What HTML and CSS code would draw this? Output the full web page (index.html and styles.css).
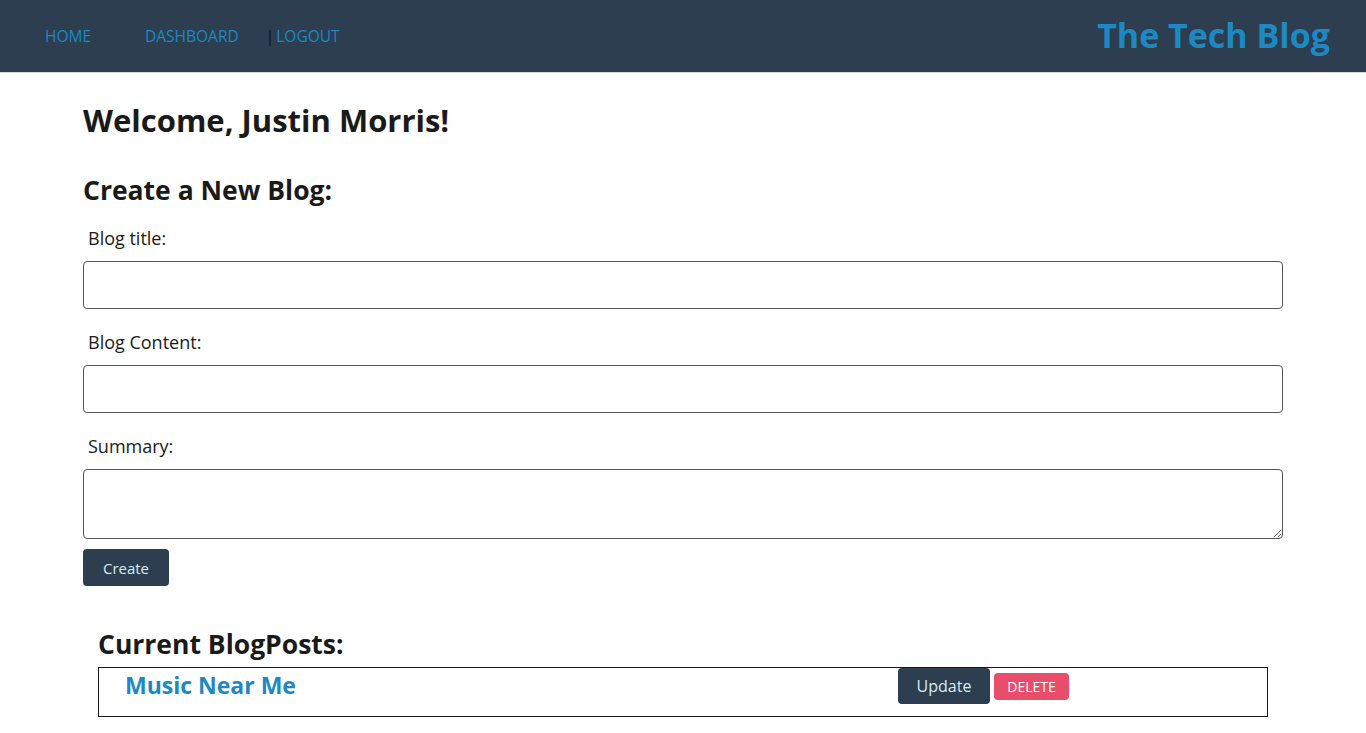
FILE: index.html
```html
<!DOCTYPE html>
<html lang="en">
<head>
<meta charset="utf-8">
<title>The Tech Blog</title>
<link rel="stylesheet" href="styles.css">
</head>
<body>
<header class="site-header">
  <nav class="nav">
    <a class="nav-link nav-home" href="#">HOME</a>
    <a class="nav-link nav-dash" href="#">DASHBOARD</a>
    <span class="nav-sep">|</span><a class="nav-link" href="#">LOGOUT</a>
  </nav>
  <h1 class="brand">The Tech Blog</h1>
</header>
<main class="container">
  <h1 class="welcome">Welcome, Justin Morris!</h1>
  <h2 class="section-title">Create a New Blog:</h2>
  <form class="blog-form">
    <label class="field-label" for="title">Blog title:</label>
    <input class="field" id="title" type="text">
    <label class="field-label" for="content">Blog Content:</label>
    <input class="field" id="content" type="text">
    <label class="field-label" for="summary">Summary:</label>
    <textarea class="field field-area" id="summary"></textarea>
    <button class="btn btn-dark btn-create" type="button">Create</button>
  </form>
  <section class="posts">
    <h2 class="section-title posts-title">Current BlogPosts:</h2>
    <div class="post">
      <a class="post-title" href="#">Music Near Me</a>
      <div class="post-actions">
        <button class="btn btn-dark btn-update" type="button">Update</button>
        <button class="btn btn-delete" type="button">DELETE</button>
      </div>
    </div>
  </section>
</main>
</body>
</html>
```
FILE: styles.css
```css
* { box-sizing: border-box; }
body {
  margin: 0;
  font-family: "Open Sans", "Noto Sans", sans-serif;
  color: #1a1a1a;
  background: #fff;
}
.site-header {
  height: 73px;
  background: #2c3e50;
  border-bottom: 1px solid #d8d8d8;
  display: flex;
  align-items: center;
  justify-content: space-between;
  padding: 0 36px 0 45px;
}
.nav {
  display: flex;
  align-items: center;
  font-size: 15.5px;
}
.nav-link {
  color: #1e88c2;
  text-decoration: none;
}
.nav-home { margin-right: 54px; }
.nav-dash { margin-right: 27px; }
.nav-sep {
  color: #111;
  margin-right: 2px;
}
.brand {
  margin: 0 0 3px;
  font-size: 34px;
  font-weight: 700;
  color: #1e88c2;
}
.container {
  width: 1200px;
  margin: 0 auto;
  padding: 27px 0 40px;
}
.welcome {
  margin: 0;
  font-size: 31px;
  font-weight: 700;
  line-height: 40px;
}
.section-title {
  margin: 32px 0 0;
  font-size: 26.5px;
  font-weight: 700;
  line-height: 36px;
}
.blog-form {
  display: flex;
  flex-direction: column;
  align-items: flex-start;
  padding-top: 18px;
}
.field-label {
  font-size: 18px;
  line-height: 24px;
  margin-left: 5px;
  margin-bottom: 11px;
}
.field {
  width: 100%;
  height: 48px;
  border: 1px solid #555;
  border-radius: 4px;
  margin: 0 0 21px;
  font: inherit;
}
.field-area {
  height: 70px;
  margin-bottom: 10px;
  resize: vertical;
}
.btn {
  font-family: inherit;
  border: none;
  border-radius: 4px;
  cursor: pointer;
}
.btn-dark {
  background: #2c3e50;
  color: #d6ecf5;
  font-size: 15px;
}
.btn-create {
  width: 86px;
  height: 37px;
}
.posts {
  padding: 40px 15px 0;
}
.posts-title { margin-top: 0; }
.post {
  display: grid;
  grid-template-columns: 799px auto;
  border: 1px solid #1a1a1a;
  height: 50px;
  margin-top: 5px;
}
.post-title {
  color: #1e88c2;
  font-weight: 700;
  font-size: 23px;
  line-height: 34px;
  padding-left: 26px;
  text-decoration: none;
}
.post-actions {
  display: flex;
  align-items: center;
  gap: 4px;
  height: 36px;
}
.btn-update {
  width: 92px;
  height: 36px;
  font-size: 16px;
}
.btn-delete {
  background: #e84d6a;
  color: #fff;
  font-size: 14px;
  width: 75px;
  height: 27px;
}
```
